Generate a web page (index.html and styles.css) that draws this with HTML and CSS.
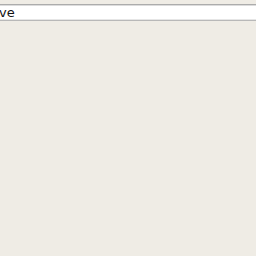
FILE: index.html
```html
<!DOCTYPE html>
<html lang="en">
<head>
  <meta charset="UTF-8" />
  <title>Search</title>
  <link rel="stylesheet" href="styles.css">
</head>
<body>
  <div class="search-bar">
    <span class="query">ve</span>
  </div>
</body>
</html>
```
FILE: styles.css
```css
* {
  box-sizing: border-box;
  margin: 0;
  padding: 0;
}

body {
  background-color: #efece5;
  font-family: 'DejaVu Sans', sans-serif;
  height: 256px;
  overflow: hidden;
}

.search-bar {
  margin: 4px -4px 0 -4px;
  height: 17px;
  background: #fff;
  border-top: 1px solid #acacac;
  border-bottom: 1px solid #b8b8b8;
  box-shadow: inset 0 1px #dcdcdc, inset 0 -1px #e6e6e6;
  display: flex;
  align-items: center;
  font-size: 13px;
  color: #111;
}

.query {
  margin-left: 3px;
}
```
